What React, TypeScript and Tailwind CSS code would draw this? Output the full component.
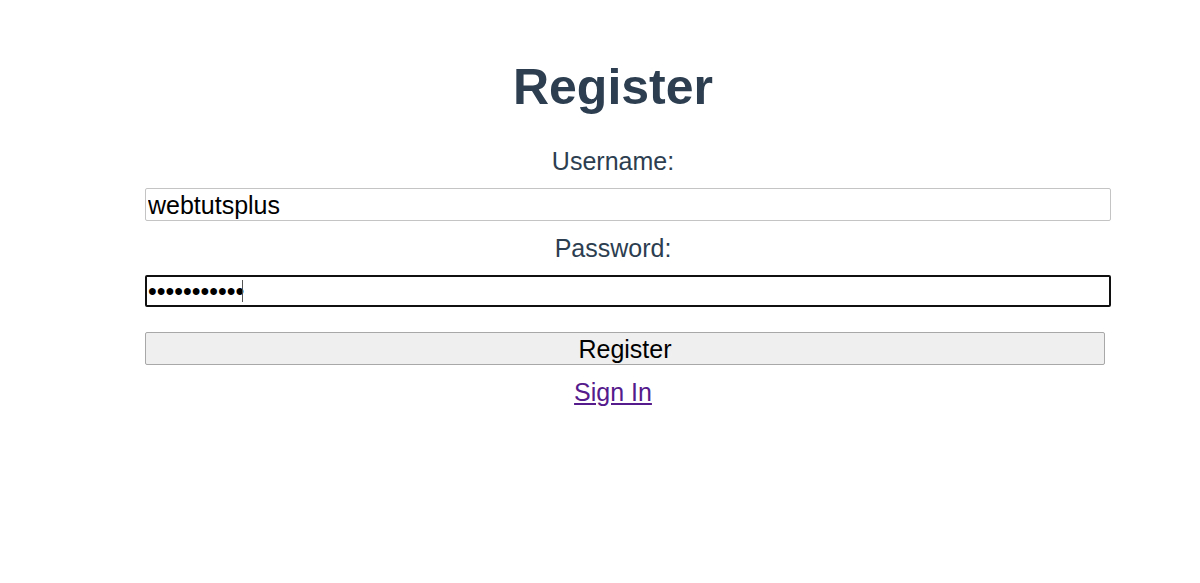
import React from "react";

export default function App() {
  return (
    <div className="min-h-[583px] w-[1200px] bg-white text-[#2c3e50]" style={{ fontFamily: '"Liberation Sans", Arial, sans-serif' }}>
      <div className="ml-[145px] w-[936px] pt-[58px] text-center">
        <h1 className="h-[58px] text-[50px] font-bold leading-[58px]">Register</h1>
        <label className="mt-[31px] block h-[29px] text-[25px] leading-[29px]">Username:</label>
        <input
          type="text"
          defaultValue="webtutsplus"
          className="mt-[12px] block h-[33px] w-[966px] rounded-[2px] border border-[#c4c4c4] bg-white px-[2px] pt-[2px] text-[25px] leading-[29px] text-black outline-none"
        />
        <label className="mt-[13px] block h-[29px] text-[25px] leading-[29px]">Password:</label>
        <div className="relative mt-[12px] h-[32px] w-[966px]">
          <input
            type="password"
            defaultValue="webtutsplus"
            readOnly
            className="block h-[32px] w-[966px] rounded-[2px] border-2 border-[#101010] bg-white px-[1px] text-[25px] leading-[28px] text-black outline-none"
          />
          <div className="absolute left-[97px] top-[5px] h-[22px] w-[1px] bg-[#555]" />
        </div>
        <button className="mt-[25px] block h-[33px] w-[960px] rounded-[2px] border border-[#a8a8a8] bg-[#efefef] pt-[2px] text-[25px] leading-[29px] text-black">
          Register
        </button>
        <div className="mt-[13px] h-[29px] text-[25px] leading-[29px]">
          <a href="#" className="text-[#551a8b] underline">Sign In</a>
        </div>
      </div>
    </div>
  );
}
